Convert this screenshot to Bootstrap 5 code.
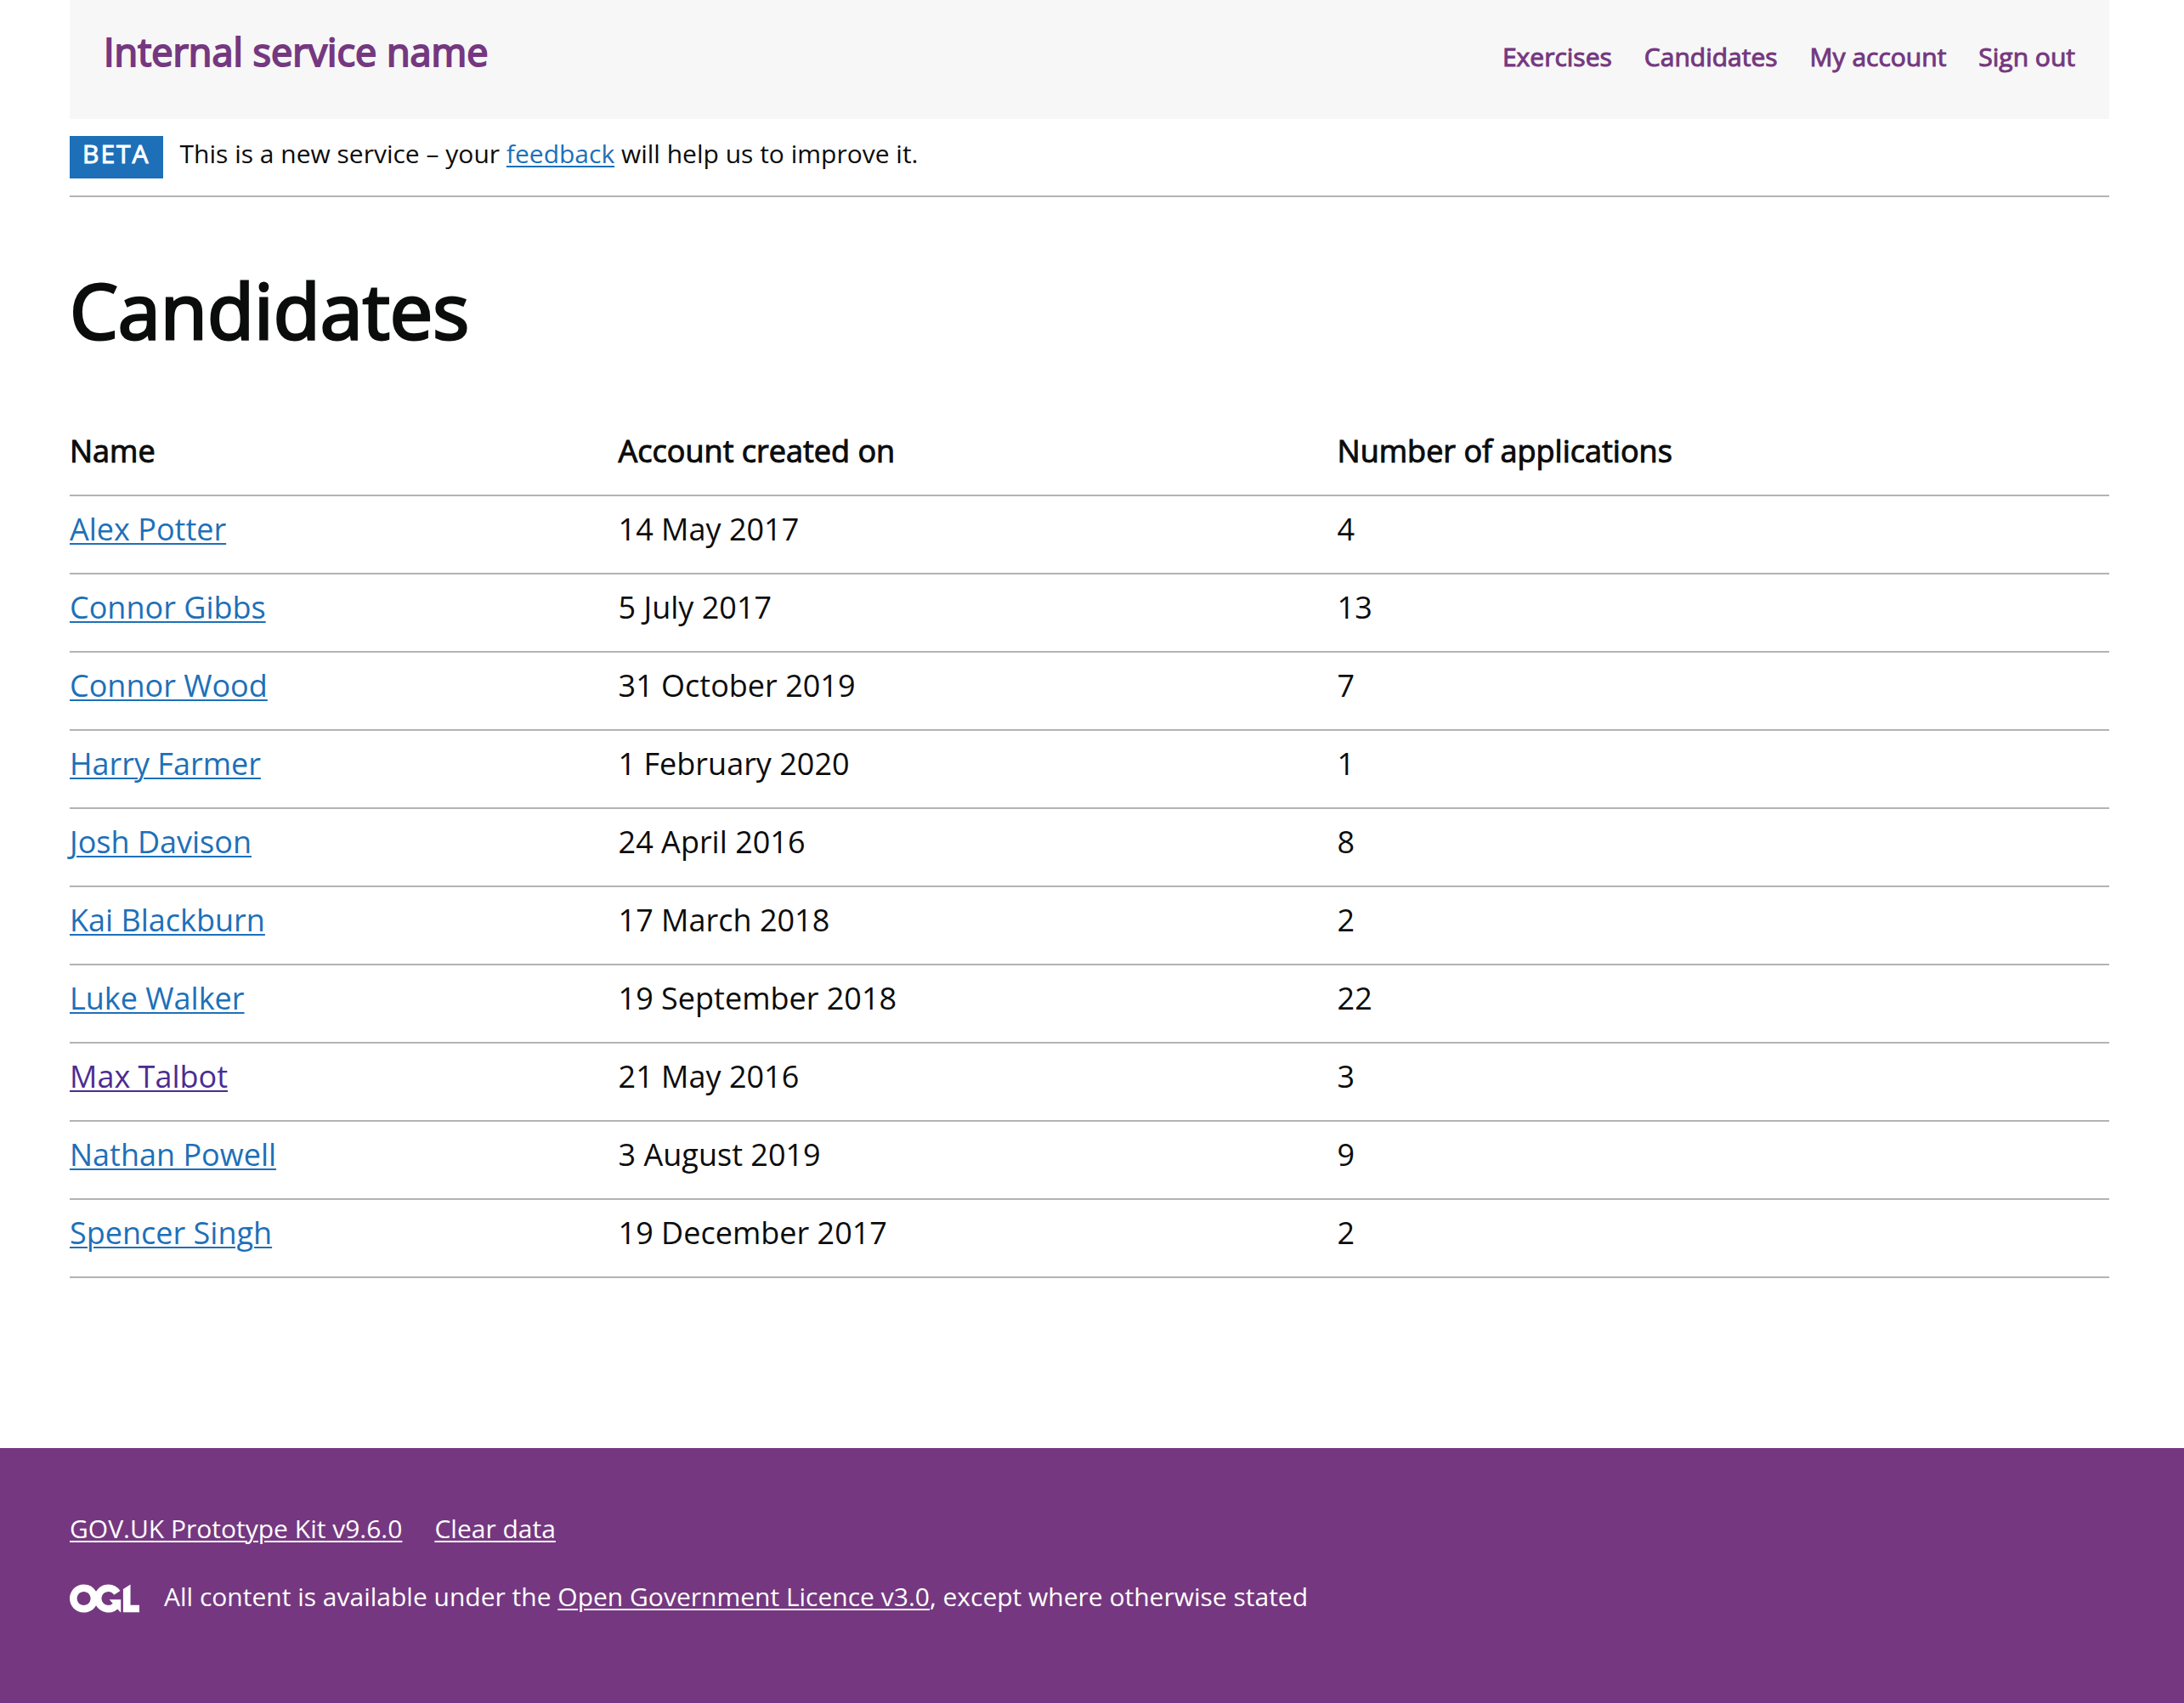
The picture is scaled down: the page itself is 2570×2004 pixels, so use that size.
<!DOCTYPE html>
<html lang="en">
<head>
<meta charset="utf-8">
<meta name="viewport" content="width=device-width, initial-scale=1">
<title>Candidates</title>
<link href="https://cdn.jsdelivr.net/npm/bootstrap@5.3.0/dist/css/bootstrap.min.css" rel="stylesheet">
<style>
  body { font-family: "Open Sans", "Noto Sans", sans-serif; font-size: 36px; line-height: 50px; color: #0b0c0c; }
  .page-gutter { padding-left: 82px; padding-right: 88px; }
  .strong-text { -webkit-text-stroke: 1px currentColor; font-weight: 400; }
  a { color: #1d70b8; text-decoration-thickness: 2px; text-underline-offset: 3px; }
  a.seen-link { color: #4c2c92; }
  .service-header { background: #f7f7f7; height: 140px; padding: 31px 40px; }
  .service-name { color: #753880; font-size: 45px; line-height: 60px; -webkit-text-stroke-width: 2px; }
  .service-nav { gap: 38px; font-size: 30px; line-height: 40px; padding-top: 16px; }
  .service-nav a { color: #753880; }
  .phase-banner { padding: 20px 0; gap: 20px; border-bottom: 2px solid #b1b4b6; font-size: 30px; line-height: 40px; }
  .phase-tag { background: #1d70b8; color: #fff; padding: 1px 15px 9px; letter-spacing: 2px; }
  .phase-text { padding-top: 1px; }
  .page-title { font-size: 90px; line-height: 100px; margin: 82px 0 78px; -webkit-text-stroke-width: 3px; }
  .people { color: inherit; border-color: #b1b4b6; --bs-table-color: #0b0c0c; }
  .people > :not(caption) > * > * { padding: 14px 40px 26px 0; border-bottom: 2px solid #b1b4b6; }
  .people > tbody { border-top: 0; }
  .people th { -webkit-text-stroke-width: 1px; }
  .col-person { width: 26.9%; } .col-created { width: 35.25%; }
  .site-footer { background: #753880; color: #fff; margin-top: 200px; padding-top: 75px; font-size: 30px; line-height: 40px; min-height: 300px; }
  .site-footer a { color: #fff; }
  .footer-links { gap: 38px; margin-bottom: 40px; }
  .licence { gap: 29px; }
  .licence svg { margin-top: 3px; }
</style>
</head>
<body class="d-flex flex-column min-vh-100">
<div class="page-gutter">
  <header class="service-header d-flex justify-content-between">
    <a class="service-name strong-text text-decoration-none" href="#">Internal service name</a>
    <nav class="service-nav d-flex strong-text" aria-label="Account">
      <a class="text-decoration-none" href="#">Exercises</a>
      <a class="text-decoration-none" href="#">Candidates</a>
      <a class="text-decoration-none" href="#">My account</a>
      <a class="text-decoration-none" href="#">Sign out</a>
    </nav>
  </header>
  <div class="phase-banner d-flex">
    <strong class="phase-tag strong-text">BETA</strong>
    <span class="phase-text">This is a new service – your <a href="#">feedback</a> will help us to improve it.</span>
  </div>
  <main>
    <h1 class="page-title strong-text">Candidates</h1>
    <table class="table people mb-0">
      <thead><tr>
        <th class="col-person strong-text" scope="col">Name</th>
        <th class="col-created strong-text" scope="col">Account created on</th>
        <th class="strong-text" scope="col">Number of applications</th>
      </tr></thead>
      <tbody>
        <tr><td><a href="#">Alex Potter</a></td><td>14 May 2017</td><td>4</td></tr>
        <tr><td><a href="#">Connor Gibbs</a></td><td>5 July 2017</td><td>13</td></tr>
        <tr><td><a href="#">Connor Wood</a></td><td>31 October 2019</td><td>7</td></tr>
        <tr><td><a href="#">Harry Farmer</a></td><td>1 February 2020</td><td>1</td></tr>
        <tr><td><a href="#">Josh Davison</a></td><td>24 April 2016</td><td>8</td></tr>
        <tr><td><a href="#">Kai Blackburn</a></td><td>17 March 2018</td><td>2</td></tr>
        <tr><td><a href="#">Luke Walker</a></td><td>19 September 2018</td><td>22</td></tr>
        <tr><td><a class="seen-link" href="#">Max Talbot</a></td><td>21 May 2016</td><td>3</td></tr>
        <tr><td><a href="#">Nathan Powell</a></td><td>3 August 2019</td><td>9</td></tr>
        <tr><td><a href="#">Spencer Singh</a></td><td>19 December 2017</td><td>2</td></tr>
      </tbody>
    </table>
  </main>
</div>
<footer class="site-footer page-gutter flex-grow-1">
  <div class="footer-links d-flex">
    <a href="#">GOV.UK Prototype Kit v9.6.0</a>
    <a href="#">Clear data</a>
  </div>
  <div class="licence d-flex align-items-center">
    <svg xmlns="http://www.w3.org/2000/svg" viewBox="0 0 483.2 195.7" width="82" height="34" role="img" aria-label="OGL"><path fill="currentColor" d="M421.5 142.8V.1l-50.7 32.3v161.1h112.4v-50.7zm-122.3-9.6A47.12 47.12 0 0 1 221 97.8c0-26 21.1-47.1 47.1-47.1 16.7 0 31.4 8.7 39.7 21.8l42.7-27.2A97.63 97.63 0 0 0 268.1 0c-36.5 0-68.3 20.1-85.1 49.7A98 98 0 0 0 97.8 0C43.9 0 0 43.9 0 97.8s43.9 97.8 97.8 97.8c36.5 0 68.3-20.1 85.1-49.7a97.76 97.76 0 0 0 149.6 25.4l19.4 22.2h3v-87.8h-80l24.3 27.5zM97.8 145c-26 0-47.1-21.1-47.1-47.1s21.1-47.1 47.1-47.1 47.1 21.1 47.1 47.1S123.8 145 97.8 145"/></svg>
    <span>All content is available under the <a href="#">Open Government Licence v3.0</a>, except where otherwise stated</span>
  </div>
</footer>
<script src="https://cdn.jsdelivr.net/npm/bootstrap@5.3.0/dist/js/bootstrap.bundle.min.js"></script>
</body>
</html>
